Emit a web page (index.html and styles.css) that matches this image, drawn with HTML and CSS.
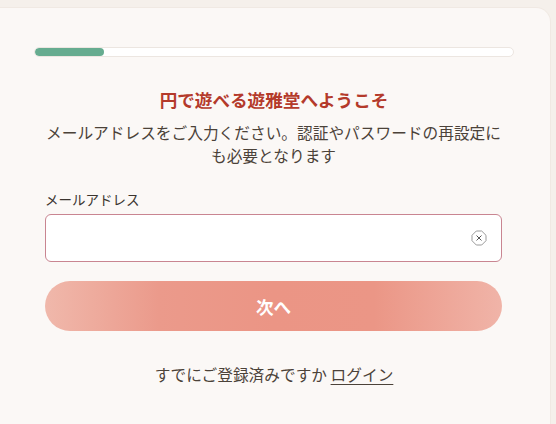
FILE: index.html
```html
<!DOCTYPE html>
<html lang="ja">
<head>
<meta charset="utf-8">
<link rel="stylesheet" href="styles.css">
</head>
<body>
<div class="card">
  <div class="progress"><div class="progress-fill" style="width:14.4%"></div></div>
  <h1 class="title">円で遊べる遊雅堂へようこそ</h1>
  <p class="lead">メールアドレスをご入力ください。認証やパスワードの再設定にも必要となります</p>
  <form class="form">
    <label class="label" for="email">メールアドレス</label>
    <div class="field">
      <input id="email" class="input" type="text">
      <span class="clear">
        <svg width="16" height="16" viewBox="0 0 16 16"><path d="M5.3 1 L10.7 1 L15 5.3 L15 10.7 L10.7 15 L5.3 15 L1 10.7 L1 5.3 Z" fill="none" stroke="#9a9a9a" stroke-width="1" stroke-linejoin="round"/><path d="M5.8 5.8 L10.2 10.2 M10.2 5.8 L5.8 10.2" stroke="#555" stroke-width="1" stroke-linecap="round"/></svg>
      </span>
    </div>
    <button type="button" class="btn">次へ</button>
  </form>
  <p class="footer">すでにご登録済みですか <a class="login" href="#">ログイン</a></p>
</div>
</body>
</html>
```
FILE: styles.css
```css
html, body {
  margin: 0;
  padding: 0;
  background: #f5f0eb;
  font-family: "Noto Sans CJK JP", "Noto Sans", sans-serif;
  overflow: hidden;
}
.card {
  box-sizing: border-box;
  margin-top: 8px;
  margin-left: -12px;
  width: 562px;
  height: 430px;
  background: #fbf8f6;
  border-radius: 0 14px 0 0;
  box-shadow: 0 0 0 1px #f0e9e3;
  padding: 39px 36px 0 46px;
}
.progress {
  height: 10px;
  background: #ffffff;
  border: 1px solid #ece6e1;
  border-radius: 6px;
  box-sizing: border-box;
  overflow: hidden;
}
.progress-fill {
  height: 100%;
  background: #66ac90;
  border-radius: 6px;
}
.title {
  margin: 30px 0 0;
  text-align: center;
  font-size: 17.6px;
  line-height: 26px;
  font-weight: 700;
  color: #b43a2b;
}
.lead {
  margin: 8px 12px 0 11px;
  text-align: center;
  font-size: 15.7px;
  line-height: 23px;
  color: #4b4239;
}
.form {
  margin: 22px 12px 0 11px;
  display: flex;
  flex-direction: column;
}
.label {
  font-size: 13.5px;
  line-height: 20px;
  color: #3a342f;
}
.field {
  position: relative;
  margin-top: 5px;
}
.input {
  display: block;
  box-sizing: border-box;
  width: 100%;
  height: 48px;
  border: 1px solid #c98591;
  border-radius: 6px;
  background: #ffffff;
  outline: none;
}
.clear {
  position: absolute;
  right: 15px;
  top: 16px;
  width: 16px;
  height: 16px;
  display: flex;
}
.btn {
  margin-top: 19px;
  height: 50px;
  border: none;
  border-radius: 25px;
  background: linear-gradient(90deg, #f0b8ab 0%, #eb9a8b 25%, #eb9585 50%, #eb9686 72%, #f0b4a8 100%);
  color: #ffffff;
  font-family: inherit;
  font-size: 17.6px;
  font-weight: 700;
}
.footer {
  margin: 32px 0 0;
  text-align: center;
  font-size: 15.7px;
  line-height: 24px;
  color: #4b4239;
}
.login {
  color: #4b4239;
  text-decoration: underline;
  text-underline-offset: 3px;
}
```
